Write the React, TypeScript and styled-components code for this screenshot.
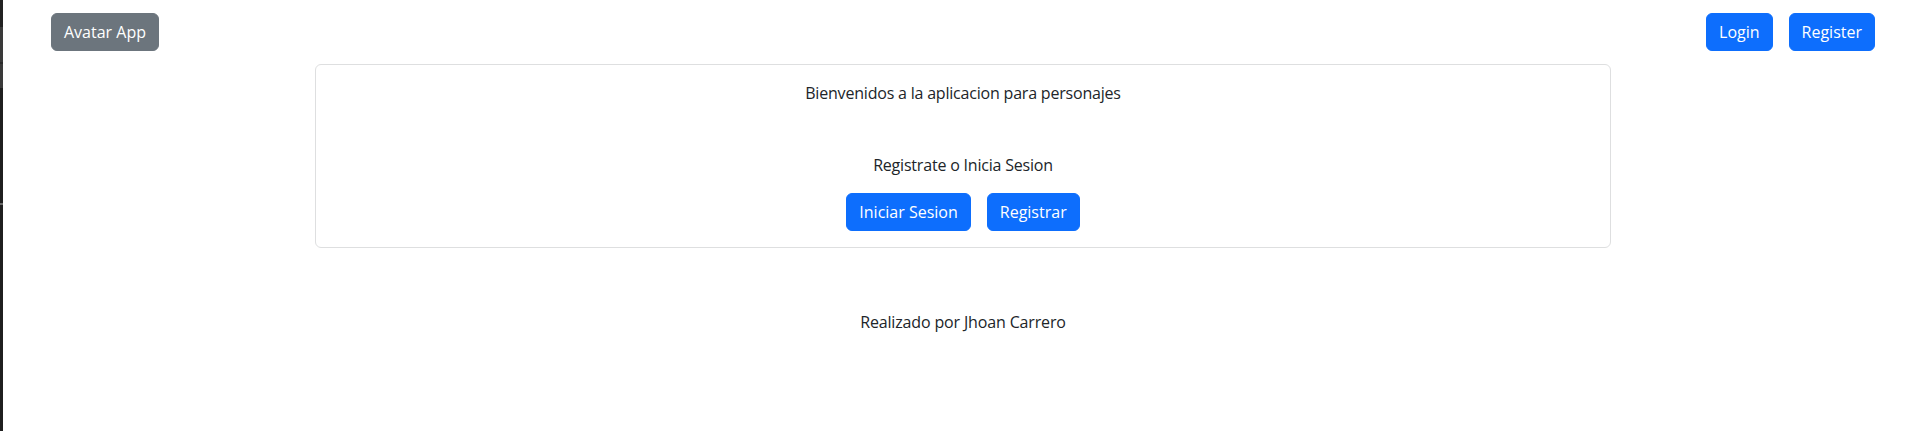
import React from "react";
import styled, { createGlobalStyle } from "styled-components";

const Global = createGlobalStyle`
  html, body {
    margin: 0;
    padding: 0;
    background: #ffffff;
  }
  body {
    font-family: "Open Sans", "Noto Sans", sans-serif;
    font-size: 16px;
    line-height: 24px;
    color: #212529;
  }
  * { box-sizing: border-box; }
`;

const Page = styled.div`
  display: flex;
  width: 1921px;
  height: 431px;
  overflow: hidden;
`;

const EdgeStrip = styled.div`
  width: 3px;
  flex: none;
  background: linear-gradient(
    to bottom,
    #222222 0px,
    #222222 27px,
    #3a3a3a 27px,
    #3a3a3a 62px,
    #2a2a2a 62px,
    #2a2a2a 64px,
    #3a3a3a 64px,
    #3a3a3a 88px,
    #1f1f1f 88px,
    #1f1f1f 203px,
    #6a6a6a 203px,
    #6a6a6a 205px,
    #1f1f1f 205px,
    #1f1f1f 100%
  );
`;

const Main = styled.div`
  flex: 1;
  display: flex;
  flex-direction: column;
`;

const NavBar = styled.nav`
  display: flex;
  align-items: center;
  justify-content: space-between;
  padding: 13px 46px 0 48px;
`;

const NavGroup = styled.div`
  display: flex;
  gap: 16px;
`;

const Button = styled.button<{ $variant?: "primary" | "secondary" }>`
  font-family: inherit;
  font-size: 16px;
  line-height: 24px;
  padding: 6px 12px;
  border: 1px solid ${(p) => (p.$variant === "secondary" ? "#6c757d" : "#0d6efd")};
  background: ${(p) => (p.$variant === "secondary" ? "#6c757d" : "#0d6efd")};
  color: #ffffff;
  border-radius: 6px;
  cursor: pointer;
  letter-spacing: 0;
`;

const Container = styled.div`
  width: 1296px;
  margin: 13px auto 0;
  position: relative;
  left: 1px;
`;

const Card = styled.section`
  border: 1px solid #dedfe0;
  border-radius: 6px;
  padding: 16px;
  text-align: center;
`;

const Text = styled.p<{ $gapBelow?: number }>`
  margin: 0 0 ${(p) => p.$gapBelow ?? 0}px;
  letter-spacing: -0.2px;
`;

const Actions = styled.div`
  display: flex;
  justify-content: center;
  gap: 16px;
`;

const Footer = styled.footer`
  margin-top: 62px;
  text-align: center;
  letter-spacing: -0.15px;
  position: relative;
  left: 1px;
`;

export default function App() {
  return (
    <>
      <Global />
      <Page>
        <EdgeStrip />
        <Main>
          <NavBar>
            <Button $variant="secondary">Avatar App</Button>
            <NavGroup>
              <Button>Login</Button>
              <Button>Register</Button>
            </NavGroup>
          </NavBar>
          <Container>
            <Card>
              <Text $gapBelow={48}>Bienvenidos a la aplicacion para personajes</Text>
              <Text $gapBelow={16}>Registrate o Inicia Sesion</Text>
              <Actions>
                <Button>Iniciar Sesion</Button>
                <Button>Registrar</Button>
              </Actions>
            </Card>
          </Container>
          <Footer>Realizado por Jhoan Carrero</Footer>
        </Main>
      </Page>
    </>
  );
}
